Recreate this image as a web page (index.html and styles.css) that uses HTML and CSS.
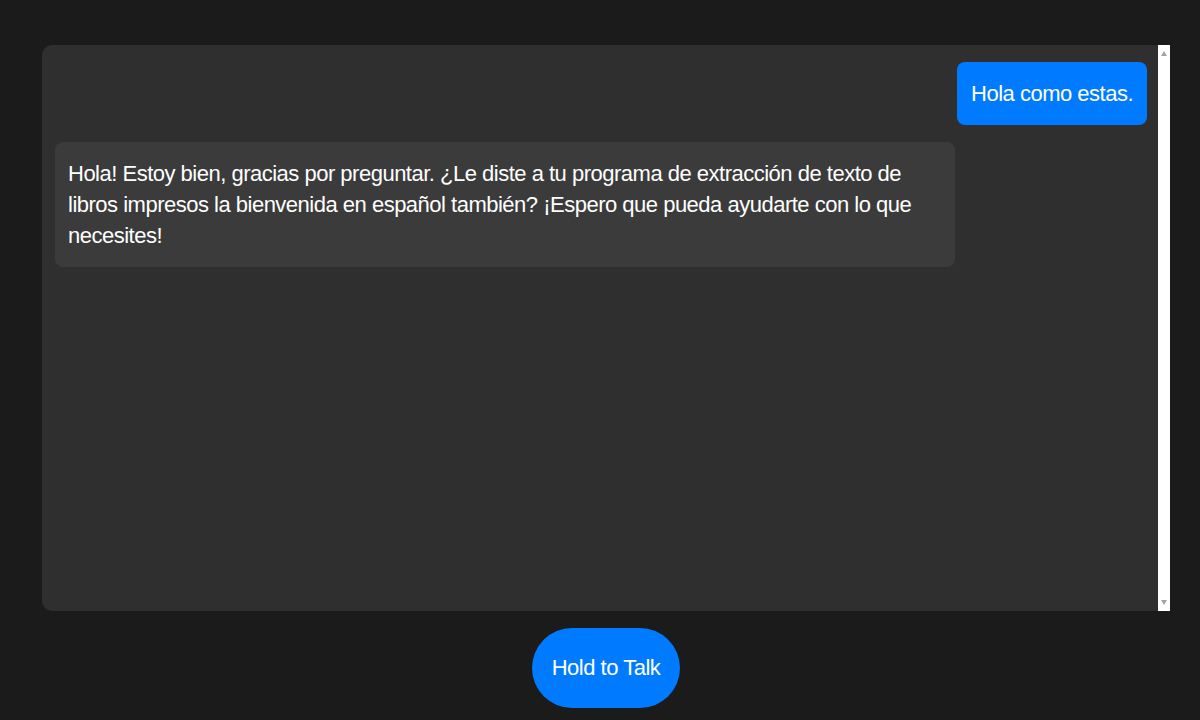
FILE: index.html
```html
<!DOCTYPE html>
<html lang="es">
<head>
<meta charset="utf-8">
<title>Chat</title>
<link rel="stylesheet" href="styles.css">
</head>
<body>
<div class="app">
  <div class="chat">
    <div class="messages">
      <div class="msg user">Hola como estas.</div>
      <div class="msg bot">Hola! Estoy bien, gracias por preguntar. ¿Le diste a tu programa de extracción de texto de libros impresos la bienvenida en español también? ¡Espero que pueda ayudarte con lo que necesites!</div>
    </div>
    <div class="scrollbar">
      <span class="arrow up"></span>
      <span class="arrow down"></span>
    </div>
  </div>
  <div class="controls">
    <button class="talk">Hold to Talk</button>
  </div>
</div>
</body>
</html>
```

FILE: styles.css
```css
html, body {
  margin: 0;
  padding: 0;
  background: #1b1b1b;
  height: 100%;
  overflow: hidden;
}

body {
  font-family: "Liberation Sans", Arial, sans-serif;
  font-size: 22px;
  letter-spacing: -0.5px;
  color: #ffffff;
}

.app {
  width: 1128px;
  margin-left: 42px;
  padding-top: 45px;
  display: flex;
  flex-direction: column;
  align-items: center;
  gap: 17px;
}

.chat {
  width: 100%;
  height: 566px;
  background: #2f2f2f;
  border-radius: 10px 0 0 10px;
  display: flex;
  overflow: hidden;
}

.messages {
  flex: 1;
  padding: 17px 11px 17px 13px;
  display: flex;
  flex-direction: column;
  gap: 17px;
}

.msg {
  line-height: 31px;
  padding: 16px 14px;
  border-radius: 8px;
  max-width: 873px;
}

.msg.user {
  align-self: flex-end;
  background: #007bff;
}

.msg.bot {
  align-self: flex-start;
  background: #3b3b3b;
  padding-left: 13px;
}

.scrollbar {
  width: 12px;
  background: #ffffff;
  display: flex;
  flex-direction: column;
  justify-content: space-between;
  align-items: center;
  padding: 6px 0;
}

.arrow {
  width: 0;
  height: 0;
  border-left: 3.5px solid transparent;
  border-right: 3.5px solid transparent;
}

.arrow.up {
  border-bottom: 5px solid #a3a3a3;
}

.arrow.down {
  border-top: 5px solid #a3a3a3;
}

.controls {
  display: flex;
  justify-content: center;
}

.talk {
  font-family: inherit;
  font-size: 22px;
  letter-spacing: -0.5px;
  color: #ffffff;
  background: #007bff;
  border: none;
  border-radius: 40px;
  height: 80px;
  padding: 0 20px;
  cursor: pointer;
}
```
